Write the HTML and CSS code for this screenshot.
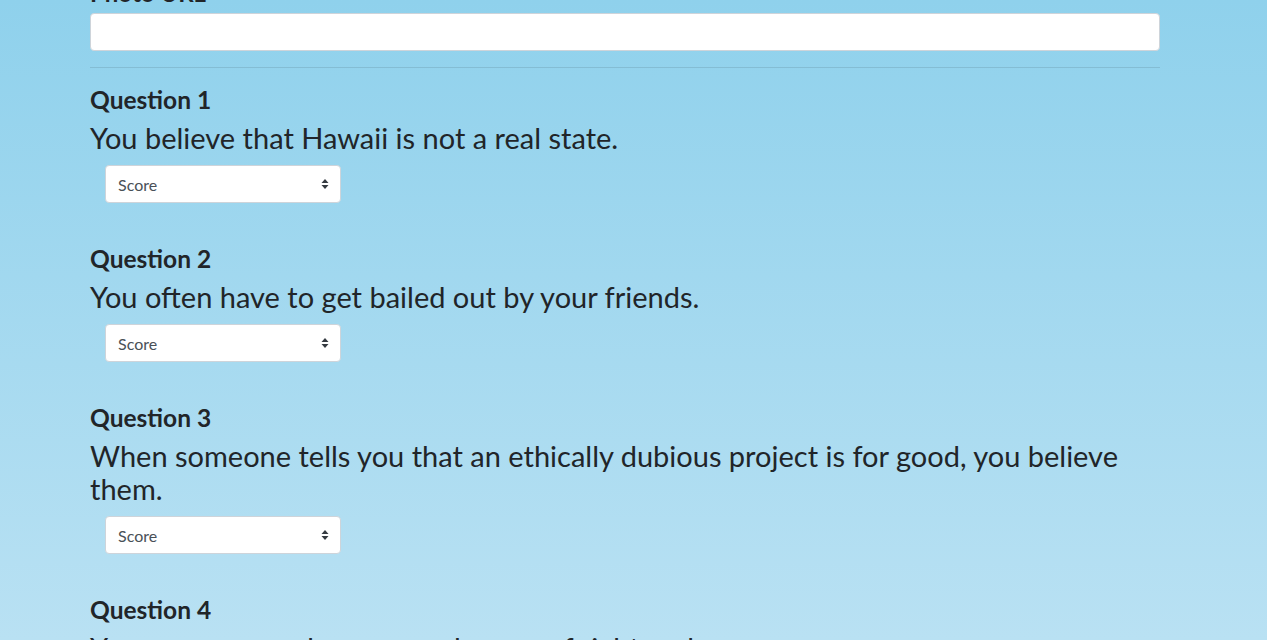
FILE: index.html
```html
<!DOCTYPE html>
<html lang="en">
<head>
<meta charset="utf-8">
<title>Survey</title>
<link rel="stylesheet" href="styles.css">
</head>
<body>
<main class="page">
  <form class="survey">
    <div class="field">
      <label class="field-label" for="photo">Photo URL</label>
      <input class="text-input" id="photo" type="text">
    </div>
    <hr class="divider">

    <div class="question">
      <div class="q-label">Question 1</div>
      <h3 class="q-text">You believe that Hawaii is not a real state.</h3>
      <div class="select"><span>Score</span><svg width="8" height="12" viewBox="0 0 8 12"><path d="M4 1 L7.5 5 H0.5 Z M4 11 L7.5 7 H0.5 Z" fill="#343a40"/></svg></div>
    </div>

    <div class="question">
      <div class="q-label">Question 2</div>
      <h3 class="q-text">You often have to get bailed out by your friends.</h3>
      <div class="select"><span>Score</span><svg width="8" height="12" viewBox="0 0 8 12"><path d="M4 1 L7.5 5 H0.5 Z M4 11 L7.5 7 H0.5 Z" fill="#343a40"/></svg></div>
    </div>

    <div class="question">
      <div class="q-label">Question 3</div>
      <h3 class="q-text">When someone tells you that an ethically dubious project is for good, you believe them.</h3>
      <div class="select"><span>Score</span><svg width="8" height="12" viewBox="0 0 8 12"><path d="M4 1 L7.5 5 H0.5 Z M4 11 L7.5 7 H0.5 Z" fill="#343a40"/></svg></div>
    </div>

    <div class="question">
      <div class="q-label">Question 4</div>
      <h3 class="q-text">You are sure you have a good sense of right and wrong.</h3>
      <div class="select"><span>Score</span><svg width="8" height="12" viewBox="0 0 8 12"><path d="M4 1 L7.5 5 H0.5 Z M4 11 L7.5 7 H0.5 Z" fill="#343a40"/></svg></div>
    </div>
  </form>
</main>
</body>
</html>
```

FILE: styles.css
```css
html, body {
  margin: 0;
  padding: 0;
}
body {
  font-family: "Segoe UI", "Lato", "Noto Sans", sans-serif;
  color: #212529;
  background: linear-gradient(to bottom, #8fd1ec 0px, #b9e1f3 640px, #c4e6f5 1000px);
  height: 640px;
  overflow: hidden;
}
.page {
  width: 1070px;
  margin: 0 0 0 90px;
}
.survey {
  margin-top: -19px;
}
.field {
  display: flex;
  flex-direction: column;
}
.field-label {
  font-weight: 700;
  font-size: 24px;
  line-height: 24px;
  margin-bottom: 8px;
}
.text-input {
  box-sizing: border-box;
  height: 38px;
  width: 100%;
  border: 1px solid #ced4da;
  border-radius: 4px;
  background: #fff;
  font-family: inherit;
  font-size: 16px;
  padding: 6px 12px;
  margin: 0;
}
.divider {
  border: 0;
  border-top: 1px solid rgba(0, 0, 0, 0.1);
  margin: 16px 0 20px;
}
.question {
  margin-bottom: 44px;
}
.q-label {
  font-weight: 700;
  font-size: 24.5px;
  line-height: 24px;
  margin-bottom: 9px;
}
.q-text {
  font-weight: 400;
  font-size: 29px;
  line-height: 33px;
  margin: 0;
}
.select {
  box-sizing: border-box;
  margin: 11px 0 0 15px;
  width: 236px;
  height: 38px;
  background: #fff;
  border: 1px solid #ced4da;
  border-radius: 4px;
  display: flex;
  align-items: center;
  justify-content: space-between;
  padding: 0 11px 0 12px;
  font-size: 16px;
  color: #495057;
}
```
